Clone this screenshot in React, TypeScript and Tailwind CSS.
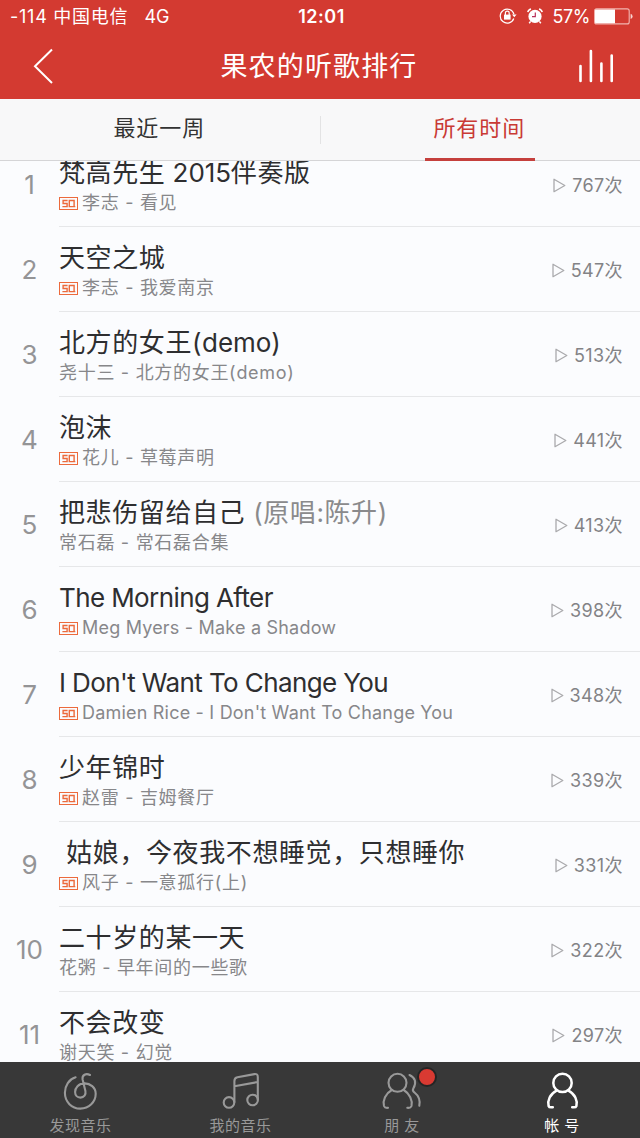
import React from "react";
import { clsx } from "clsx";

interface Song {
  rank: number;
  title: string;
  note?: string;
  artist: string;
  album: string;
  sq?: boolean;
  plays: number;
  latin?: boolean;
}

const songs: Song[] = [
  { rank: 1, title: "梵高先生 2015伴奏版", artist: "李志", album: "看见", sq: true, plays: 767 },
  { rank: 2, title: "天空之城", artist: "李志", album: "我爱南京", sq: true, plays: 547 },
  { rank: 3, title: "北方的女王(demo)", artist: "尧十三", album: "北方的女王(demo)", plays: 513 },
  { rank: 4, title: "泡沫", artist: "花儿", album: "草莓声明", sq: true, plays: 441 },
  { rank: 5, title: "把悲伤留给自己", note: "(原唱:陈升)", artist: "常石磊", album: "常石磊合集", plays: 413 },
  { rank: 6, title: "The Morning After", artist: "Meg Myers", album: "Make a Shadow", sq: true, plays: 398, latin: true },
  { rank: 7, title: "I Don't Want To Change You", artist: "Damien Rice", album: "I Don't Want To Change You", sq: true, plays: 348, latin: true },
  { rank: 8, title: "少年锦时", artist: "赵雷", album: "吉姆餐厅", sq: true, plays: 339 },
  { rank: 9, title: " 姑娘，今夜我不想睡觉，只想睡你", artist: "风子", album: "一意孤行(上)", sq: true, plays: 331 },
  { rank: 10, title: "二十岁的某一天", artist: "花粥", album: "早年间的一些歌", plays: 322 },
  { rank: 11, title: "不会改变", artist: "谢天笑", album: "幻觉", plays: 297 }
];

const StatusBar = () => (
  <div className="flex h-8 items-center text-[18px] leading-8">
    <div className="flex flex-1 gap-4 pl-[10px] pt-px">
      <span className="tracking-[0.75px]">-114 中国电信</span>
      <span>4G</span>
    </div>
    <span className="pt-px text-[18px] font-semibold tracking-[0.5px]">12:01</span>
    <div className="flex flex-1 items-center justify-end pr-[7px]">
      <svg width="18" height="18" viewBox="0 0 18 18" fill="none" stroke="currentColor" strokeWidth="1.2">
        <path d="M14.8 11.5a7 7 0 1 1 .2-4.2" />
        <path d="M13 7.4h4.6l-2.3 2.9z" fill="currentColor" stroke="none" />
        <rect x="5" y="7.6" width="6.6" height="5" fill="currentColor" stroke="none" />
        <path d="M6.4 8V6a1.9 1.9 0 0 1 3.8 0v2" />
      </svg>
      <svg className="ml-[10px]" width="16" height="16" viewBox="0 0 16 16" fill="none">
        <circle cx="8" cy="8.4" r="6.6" fill="white" />
        <path d="M.8 4.2Q1.2 1.6 4 .9M15.2 4.2Q14.8 1.6 12 .9M3.6 13.4 2.2 15.2M12.4 13.4l1.4 1.8" stroke="white" strokeWidth="1.5" />
        <path d="M8.3 4.4v4.3H5" stroke="#b8305a" strokeWidth="1.2" />
      </svg>
      <span className="ml-[9px] pt-px tracking-[-0.4px]">57%</span>
      <svg className="ml-[4px]" width="39" height="17" viewBox="0 0 39 17" fill="none">
        <rect x=".6" y=".9" width="34.6" height="15" rx="2" stroke="#f2b5b0" strokeWidth="1.1" />
        <path d="M2 1.6h19v13.6H2a1 1 0 0 1-1-1V2.6a1 1 0 0 1 1-1z" fill="white" />
        <path d="M36.6 5.8q2 .8 2 2.6t-2 2.6z" fill="#f7d3d0" />
      </svg>
    </div>
  </div>
);

const Header = () => (
  <header className="h-[99px] bg-[#d33a31] text-white">
    <StatusBar />
    <div className="flex h-[67px] items-center justify-between pl-[33px] pr-[26px]">
      <svg width="21" height="36" viewBox="0 0 21 36" fill="none" stroke="currentColor" strokeWidth="2">
        <path d="M19 1.5 2 18.3 19 35" />
      </svg>
      <h1 className="pl-[6px] pt-[3px] text-[27px] tracking-[1.15px]">果农的听歌排行</h1>
      <svg width="36" height="34" viewBox="0 0 36 34" fill="none" stroke="currentColor" strokeWidth="2.6" strokeLinecap="round">
        <path d="M2.5 17v15M12.9 2v30M23.4 14.5V32M33.7 6.5V32" />
      </svg>
    </div>
  </header>
);

const Tabs = () => (
  <nav className="relative z-10 flex h-[62px] items-center border-b border-[#d5d5d7] bg-[#f8f8f9] text-[22px] tracking-[0.9px]">
    <div className="flex h-full flex-1 items-center justify-center text-[#333]">
      <span className="-mt-[2px] pr-px">最近一周</span>
    </div>
    <div className="h-7 w-px bg-[#e3e3e4]" />
    <div className="relative flex h-full flex-1 items-center justify-center text-[#c93a35]">
      <span className="-mt-[2px] pr-[2px]">所有时间</span>
      <div className="absolute -bottom-px left-1/2 h-[3px] w-[110px] -translate-x-1/2 bg-[#c5403d]" />
    </div>
  </nav>
);

const SqBadge = () => (
  <svg className="mr-[4px] shrink-0" width="19" height="13" viewBox="0 0 19 13" fill="none" stroke="#ec6a3c">
    <rect x=".5" y=".5" width="18" height="12" strokeWidth="1" />
    <path d="M8.6 3.5H4.1v3h4v3.1H3.4M10.3 3.5h4.8v6.1h-4.8zM13.3 9.6h3" strokeWidth="1.4" />
  </svg>
);

const SongRow = ({ song }: { song: Song }) => (
  <li className="flex h-[85px] shrink-0">
    <div className="flex w-[59px] items-center justify-center pb-[1px] text-[26px] text-[#949496]">
      {song.rank}
    </div>
    <div className="flex flex-1 items-center border-b border-[#e6e7e9] pr-[17px]">
      <div className="flex-1 pt-[4px]">
        <div
          className={clsx(
            "h-[34px] whitespace-pre text-[26px] leading-[34px] text-[#2e2e30]",
            song.latin ? "tracking-[-0.6px]" : "tracking-[0.6px]"
          )}
        >
          {song.title.split(/([\w ]+)/).map((part, i) =>
            i % 2 && !song.latin ? (
              <span key={i} className="tracking-[-0.1px]">{part}</span>
            ) : (
              part
            )
          )}
          {song.note && <span className="text-[#8a8a8c]"> {song.note}</span>}
        </div>
        <div
          className={clsx(
            "flex h-[26px] items-center whitespace-pre text-[18px] leading-[26px] text-[#87878a]",
            song.latin ? "tracking-[0.2px]" : "tracking-[0.7px]"
          )}
        >
          {song.sq && <SqBadge />}
          <span>
            {song.artist} - {song.album}
          </span>
        </div>
      </div>
      <div className="flex items-center gap-[6px] pt-[2px] text-[18px] text-[#838386]">
        <svg width="13" height="15" viewBox="0 0 13 15" fill="none" stroke="#aaaaad" strokeWidth="1.3">
          <path d="M1 1.3v12.4l10.8-6.2z" strokeLinejoin="round" />
        </svg>
        <span className="tracking-[0.4px]">{song.plays}次</span>
      </div>
    </div>
  </li>
);

const TabItem = ({ label, active, children }: { label: string; active?: boolean; children: React.ReactNode }) => (
  <div className={clsx("flex flex-1 flex-col items-center pt-[10px]", active ? "text-white" : "text-[#999]")}>
    <div className="relative">
      <svg className="overflow-visible" width="40" height="40" viewBox="0 0 40 40" fill="none" stroke="currentColor" strokeWidth="2.1" strokeLinecap="round" strokeLinejoin="round">
        {children}
      </svg>
      {label === "朋 友" && (
        <div className="absolute -right-[17px] -top-[5px] size-[20px] rounded-full border-2 border-[#252525] bg-[#d93a32]" />
      )}
    </div>
    <span className={clsx("mt-[2px] whitespace-pre text-[15px] leading-6 tracking-[0.5px]", label.includes(" ") ? "pl-[4px]" : "pl-px")}>
      {label}
    </span>
  </div>
);

const BottomBar = () => (
  <footer className="relative z-10 flex h-[76px] bg-[#383838]">
    <TabItem label="发现音乐">
      <path d="M15.6 5.3C9 7.3 4.9 13.5 4.9 20.8C4.9 30 11.8 36.6 20.3 36.6C29 36.6 35.7 30 35.7 21.8C35.7 15.3 30 11.4 24.8 11.4C18.3 11.4 15.1 16 15.1 20C15.1 23.5 17.4 25.6 20.4 25.6C24 25.6 26.2 22.7 25.4 19L22.6 7.5C21.8 3 26 .8 30 3" />
    </TabItem>
    <TabItem label="我的音乐">
      <circle cx="9" cy="30.4" r="5.3" />
      <circle cx="32.6" cy="28" r="5.3" />
      <path d="M14.4 30V9q0-3.2 3-3.8l17-3.1q3.4-.5 3.4 2.8V27.5M14.4 14.2l23.4-4.2" />
    </TabItem>
    <TabItem label="朋 友">
      <circle cx="17.5" cy="10.8" r="9" />
      <path d="M11.8 18C5.5 21.5 2.5 28.5 4 34q.8 2.2 4 1.8M23.8 18c5.7 3.5 9 10.5 7.7 16q-.8 2.2-4.2 1.8M29.5 3c5.8 2.6 7.3 7.6 3.8 13.5q-1.2 2.2 1 3.8c4.7 3.8 6.1 8.2 5 13.4" />
    </TabItem>
    <TabItem label="帐 号" active>
      <g strokeWidth="2.5">
        <circle cx="22.5" cy="10.9" r="9.2" />
        <path d="M16.5 18.6C10 22 7.3 28.5 8.6 34q.6 1.8 4.2 1.2M28.5 18.6C35 22 37.7 28.5 36.4 34q-.6 1.8-4.2 1.2" />
      </g>
    </TabItem>
  </footer>
);

export default function App() {
  return (
    <div className="flex h-[1138px] w-[640px] flex-col overflow-hidden bg-[#fbfcfe] font-['Inter','Noto_Sans_CJK_SC',sans-serif]">
      <Header />
      <Tabs />
      <ul className="-mt-[19px] flex min-h-0 flex-1 flex-col overflow-hidden">
        {songs.map((song) => (
          <SongRow key={song.rank} song={song} />
        ))}
      </ul>
      <BottomBar />
    </div>
  );
}
